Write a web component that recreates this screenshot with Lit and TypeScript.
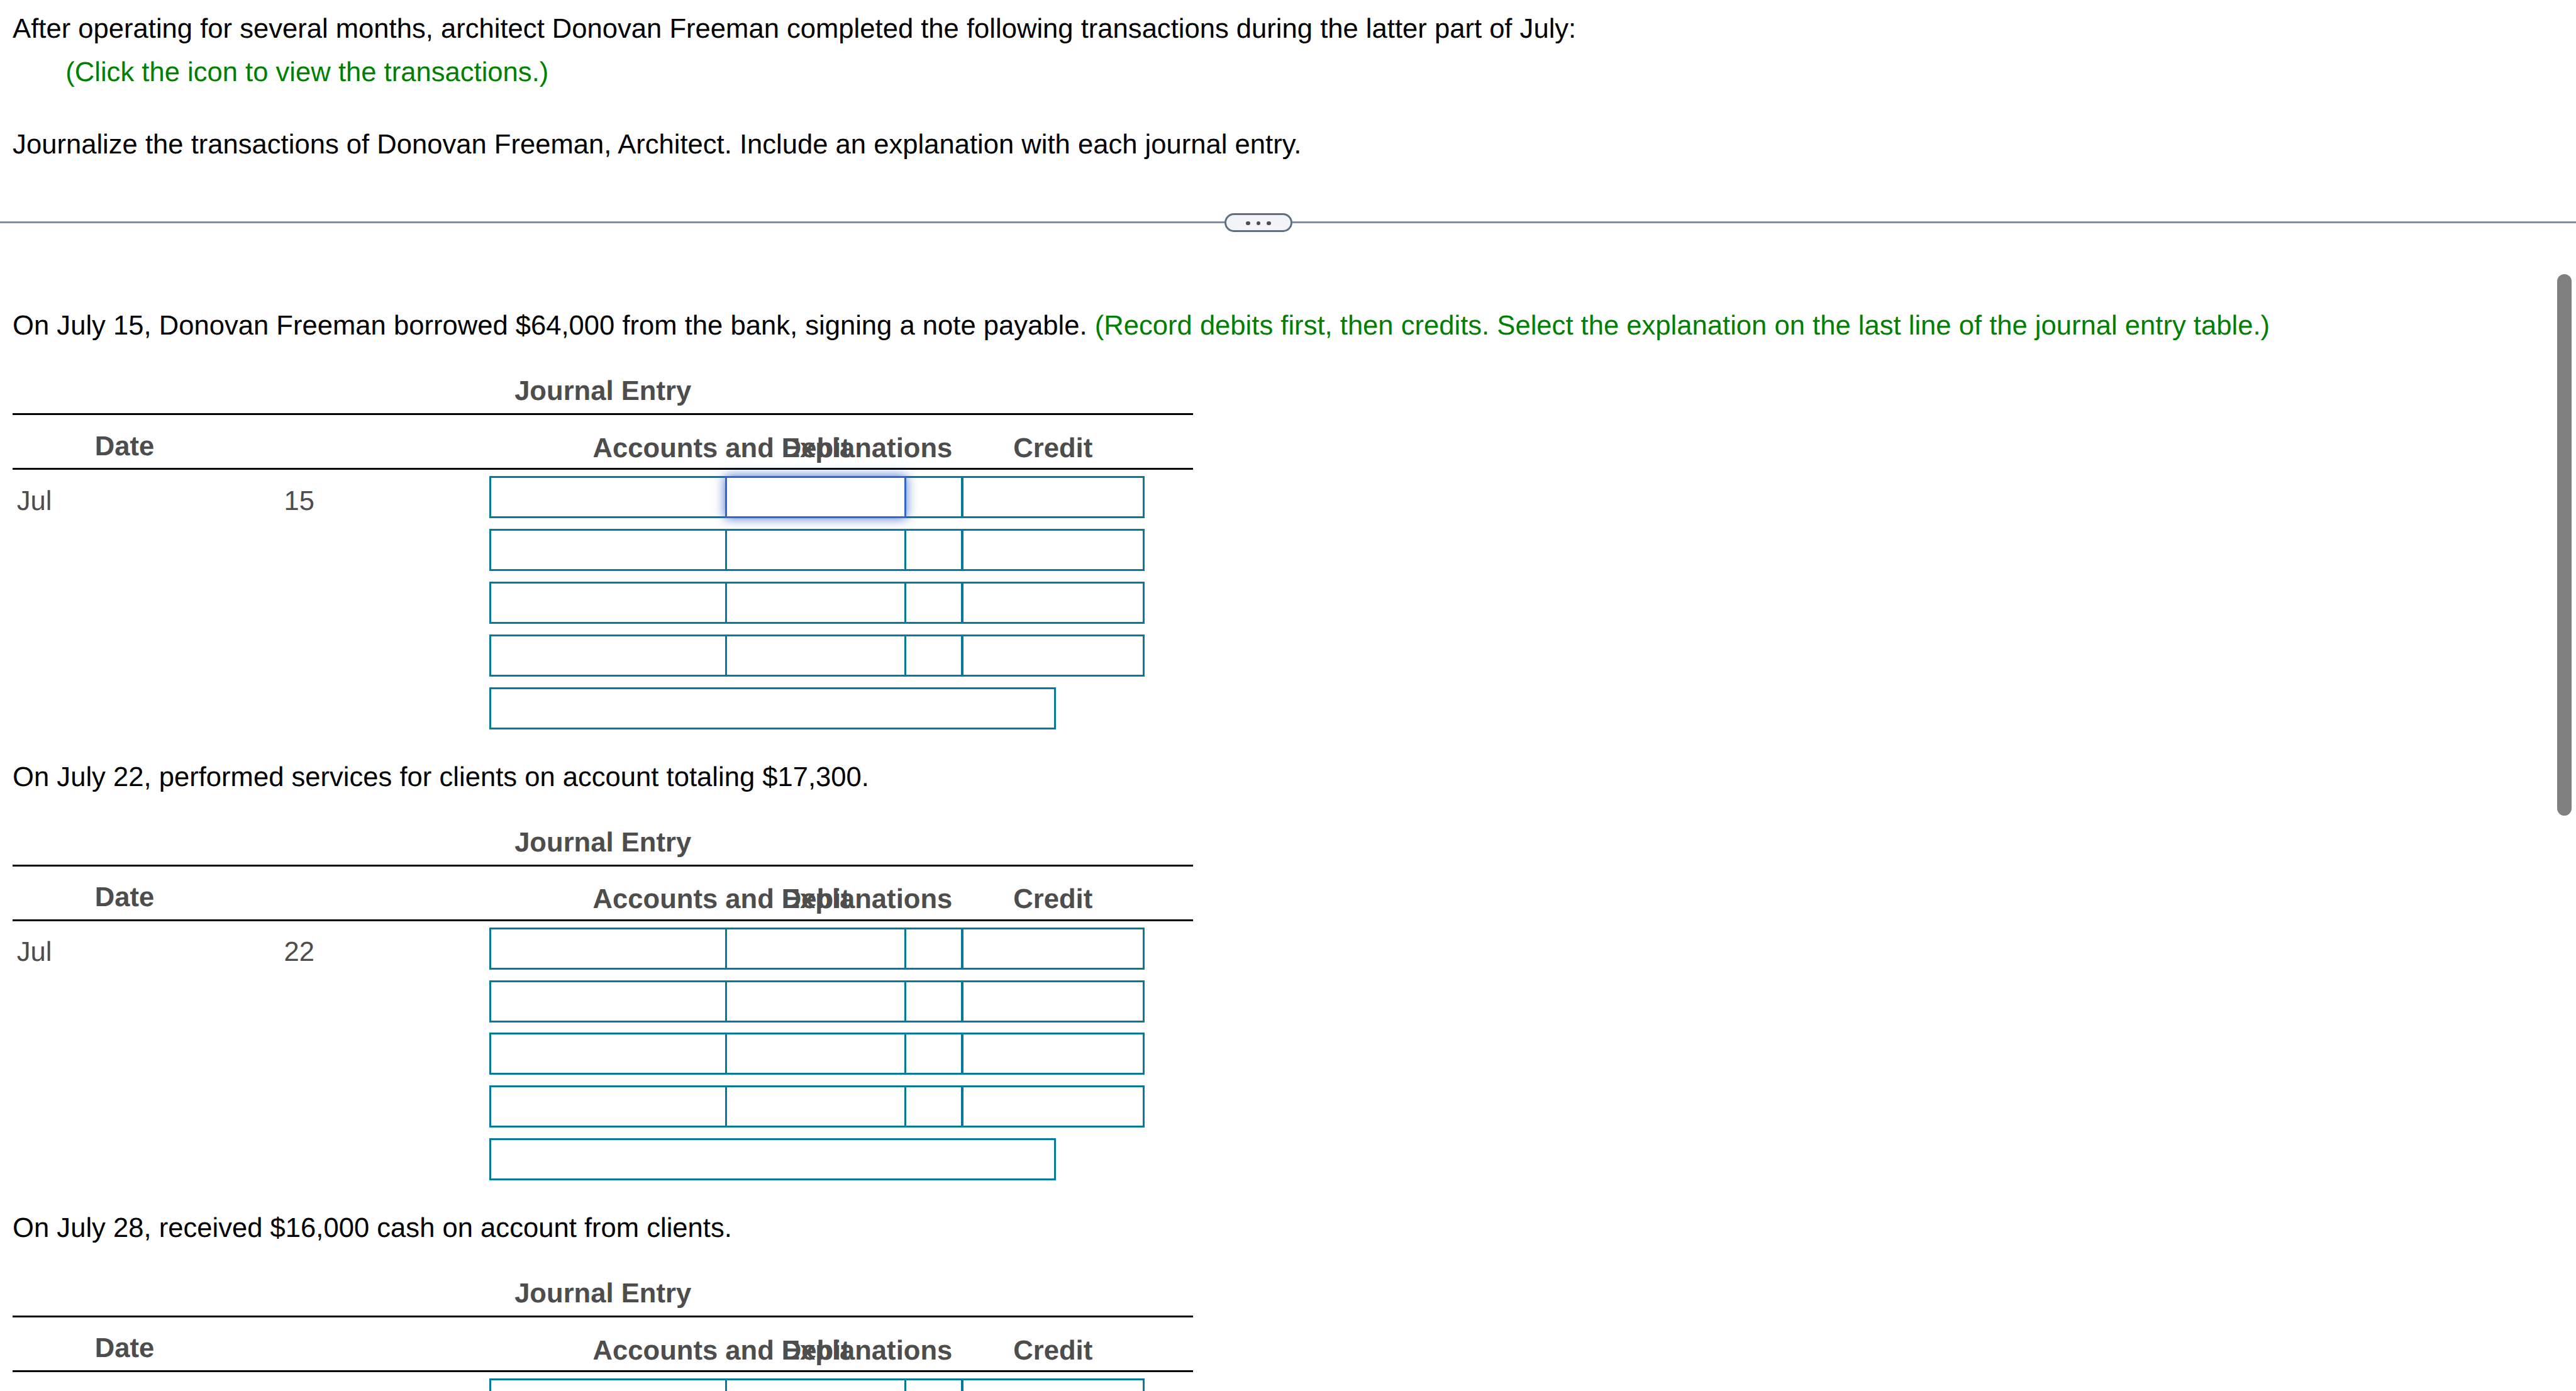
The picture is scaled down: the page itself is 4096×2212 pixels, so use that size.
// <app-root>
//
//
// All lengths are multiples of --u, one layout unit of a 1222 unit wide page.

import { LitElement, css, html } from "lit";
import { classMap } from "lit/directives/class-map.js";

interface Transaction {
  prompt: string;
  hint?: string;
  month?: string;
  day?: string;
  activeRow?: number;
}

const TRANSACTIONS: Transaction[] = [
  {
    prompt: "On July 15, Donovan Freeman borrowed $64,000 from the bank, signing a note payable.",
    hint: "(Record debits first, then credits. Select the explanation on the last line of the journal entry table.)",
    month: "Jul",
    day: "15",
    activeRow: 0,
  },
  {
    prompt: "On July 22, performed services for clients on account totaling $17,300.",
    month: "Jul",
    day: "22",
  },
  {
    prompt: "On July 28, received $16,000 cash on account from clients.",
  },
];

const ROWS = [0, 1, 2, 3];

export class JournalEntry extends LitElement {
  static override styles = css`
    :host {
      display: block;
      width: calc(var(--u) * 560);
      color: #4d4d4d;
    }
    .title {
      box-sizing: border-box;
      height: calc(var(--u) * 19);
      padding-top: calc(var(--u) * 0.2);
      border-bottom: var(--u) solid #000;
      font-weight: bold;
      text-align: center;
    }
    /* Debit shares its column with the much wider accounts column. */
    .row {
      display: grid;
      grid-template-columns:
        calc(var(--u) * 226) calc(var(--u) * 112) calc(var(--u) * 86)
        calc(var(--u) * 26) var(--u) calc(var(--u) * 44)
        calc(var(--u) * 42) calc(var(--u) * 23);
    }
    .head {
      box-sizing: border-box;
      height: calc(var(--u) * 26);
      padding-top: calc(var(--u) * 8.3);
      border-bottom: var(--u) solid #000;
      font-weight: bold;
      text-align: center;
    }
    .head > *,
    .line > * {
      grid-row: 1;
    }
    .head .date {
      grid-column: 1;
      width: calc(var(--u) * 106.2);
      margin-top: calc(var(--u) * -1);
    }
    .head .accounts {
      grid-column: 2 / 7;
    }
    .debit {
      grid-column: 3;
    }
    .credit {
      grid-column: 5 / 8;
    }
    .body {
      display: flex;
      flex-direction: column;
      gap: calc(var(--u) * 5);
      padding-top: calc(var(--u) * 3);
    }
    .line {
      height: calc(var(--u) * 20);
    }
    .line .date {
      grid-column: 1;
      display: grid;
      grid-template-columns: calc(var(--u) * 126.7) 1fr;
      padding: calc(var(--u) * 4.3) 0 0 calc(var(--u) * 2);
    }
    .line .accounts {
      grid-column: 2 / 6;
    }
    .explanation {
      grid-column: 2 / 7;
    }
    .field {
      box-sizing: border-box;
      border: var(--u) solid #047a9c;
      height: calc(var(--u) * 20);
    }
    .field.active {
      border-color: #3366cc;
      box-shadow: 0 0 calc(var(--u) * 5) rgba(51, 102, 204, 0.9);
    }
  `;

  static override properties = {
    month: { type: String },
    day: { type: String },
    activeRow: { attribute: false },
  };

  declare month: string | undefined;
  declare day: string | undefined;
  declare activeRow: number | undefined;

  protected override render() {
    return html`
      <div class="title">Journal Entry</div>
      <div class="row head">
        <span class="date">Date</span>
        <span class="accounts">Accounts and Explanations</span>
        <span class="debit">Debit</span>
        <span class="credit">Credit</span>
      </div>
      <div class="body">
        ${ROWS.map(
          (i) => html`
            <div class="row line">
              ${i === 0 && this.day
                ? html`<div class="date"><span>${this.month}</span><span>${this.day}</span></div>`
                : null}
              <div class="field accounts"></div>
              <div class=${classMap({ field: true, debit: true, active: this.activeRow === i })}></div>
              <div class="field credit"></div>
            </div>
          `,
        )}
        <div class="row line"><div class="field explanation"></div></div>
      </div>
    `;
  }
}

export class AppRoot extends LitElement {
  static override styles = css`
    :host {
      --u: calc(100vw / 1222);
      display: flex;
      flex-direction: column;
      height: 100vh;
      overflow: hidden;
      background: #fff;
      color: #000;
      font-family: "Liberation Sans", Arial, sans-serif;
      font-size: calc(var(--u) * 13.008);
      line-height: calc(var(--u) * 15);
      text-rendering: geometricPrecision;
      white-space: nowrap;
    }
    p {
      margin: 0;
    }
    .problem {
      flex: none;
      padding: calc(var(--u) * 6.3) calc(var(--u) * 6) calc(var(--u) * 24.7);
    }
    .link {
      margin: calc(var(--u) * 5.5) 0 calc(var(--u) * 19.5);
      padding-left: calc(var(--u) * 25.1);
    }
    .link,
    .hint {
      color: #008000;
    }
    .splitter {
      flex: none;
      display: flex;
      align-items: center;
      height: calc(var(--u) * 9);
    }
    .rule {
      flex: 1;
      height: var(--u);
      background: #868da1;
    }
    .rule.left {
      flex: none;
      width: calc(var(--u) * 581);
    }
    .grip {
      box-sizing: border-box;
      display: flex;
      justify-content: center;
      gap: calc(var(--u) * 3);
      width: calc(var(--u) * 32);
      height: calc(var(--u) * 9);
      padding-top: calc(var(--u) * 3);
      border: var(--u) solid #5f6f7e;
      border-radius: calc(var(--u) * 4.5);
      background: #f3f4f7;
    }
    .dot {
      width: calc(var(--u) * 2);
      height: calc(var(--u) * 2);
      border-radius: 50%;
      background: #4d4e4d;
    }
    .answers {
      flex: 1;
      min-height: 0;
      display: flex;
      justify-content: space-between;
      overflow: hidden;
    }
    .list {
      padding: calc(var(--u) * 37) 0 0 calc(var(--u) * 6);
    }
    .transaction {
      height: calc(var(--u) * 214);
    }
    .transaction p {
      padding-top: calc(var(--u) * 0.2);
      margin-bottom: calc(var(--u) * 15.8);
    }
    .track {
      padding: calc(var(--u) * 20) calc(var(--u) * 2) 0 0;
    }
    .thumb {
      width: calc(var(--u) * 7);
      height: calc(var(--u) * 257);
      border-radius: calc(var(--u) * 3.5);
      background: #808080;
    }
  `;

  protected override render() {
    return html`
      <section class="problem">
        <p>
          After operating for several months, architect Donovan Freeman completed the following
          transactions during the latter part of July:
        </p>
        <p class="link">(Click the icon to view the transactions.)</p>
        <p>
          Journalize the transactions of Donovan Freeman, Architect. Include an explanation with
          each journal entry.
        </p>
      </section>
      <div class="splitter">
        <div class="rule left"></div>
        <div class="grip">
          <span class="dot"></span><span class="dot"></span><span class="dot"></span>
        </div>
        <div class="rule"></div>
      </div>
      <section class="answers">
        <div class="list">
          ${TRANSACTIONS.map(
            (t) => html`
              <div class="transaction">
                <p>${t.prompt} ${t.hint ? html`<span class="hint">${t.hint}</span>` : null}</p>
                <journal-entry
                  .month=${t.month}
                  .day=${t.day}
                  .activeRow=${t.activeRow}
                ></journal-entry>
              </div>
            `,
          )}
        </div>
        <div class="track"><div class="thumb"></div></div>
      </section>
    `;
  }
}

customElements.define("journal-entry", JournalEntry);
customElements.define("app-root", AppRoot);
